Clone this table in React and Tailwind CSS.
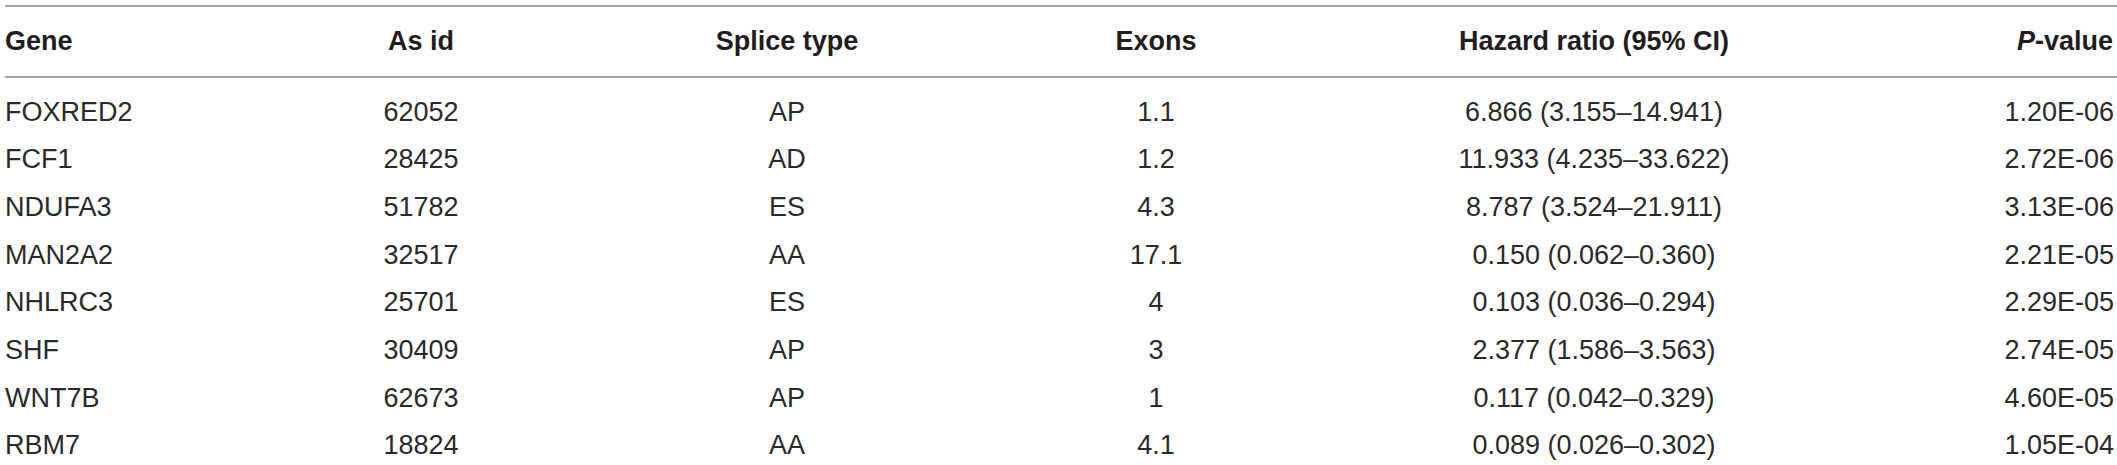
import React from "react";

const rows = [
  ["FOXRED2", "62052", "AP", "1.1", "6.866 (3.155–14.941)", "1.20E-06"],
  ["FCF1", "28425", "AD", "1.2", "11.933 (4.235–33.622)", "2.72E-06"],
  ["NDUFA3", "51782", "ES", "4.3", "8.787 (3.524–21.911)", "3.13E-06"],
  ["MAN2A2", "32517", "AA", "17.1", "0.150 (0.062–0.360)", "2.21E-05"],
  ["NHLRC3", "25701", "ES", "4", "0.103 (0.036–0.294)", "2.29E-05"],
  ["SHF", "30409", "AP", "3", "2.377 (1.586–3.563)", "2.74E-05"],
  ["WNT7B", "62673", "AP", "1", "0.117 (0.042–0.329)", "4.60E-05"],
  ["RBM7", "18824", "AA", "4.1", "0.089 (0.026–0.302)", "1.05E-04"],
];

// column widths line up with the original table's centres
const cols = "grid grid-cols-[295px_242px_490px_248px_628px_1fr] items-center";

const App = () => {
  return (
    <div className="bg-white w-[2117px] h-[465px] overflow-hidden pt-[5px] pl-[5px] font-['Liberation_Sans',Arial,sans-serif] text-[27px] text-[#2a2a2a]">
      {/* Header */}
      <div className={`${cols} h-[73px] border-t-2 border-b-2 border-[#a3a3a3] font-bold text-[#1f1d1e]`}>
        <div className="text-left">Gene</div>
        <div className="text-center">As id</div>
        <div className="text-center">Splice type</div>
        <div className="text-center">Exons</div>
        <div className="text-center">Hazard ratio (95% CI)</div>
        <div className="text-right pr-[4px]">
          <span className="italic">P</span>-value
        </div>
      </div>

      {/* Body */}
      <div className="pt-[10px]">
        {rows.map((r) => (
          <div key={r[0]} className={`${cols} h-[47.7px]`}>
            <div className="text-left">{r[0]}</div>
            <div className="text-center">{r[1]}</div>
            <div className="text-center">{r[2]}</div>
            <div className="text-center">{r[3]}</div>
            <div className="text-center">{r[4]}</div>
            <div className="text-right pr-[3px]">{r[5]}</div>
          </div>
        ))}
      </div>
    </div>
  );
};

export default App;
